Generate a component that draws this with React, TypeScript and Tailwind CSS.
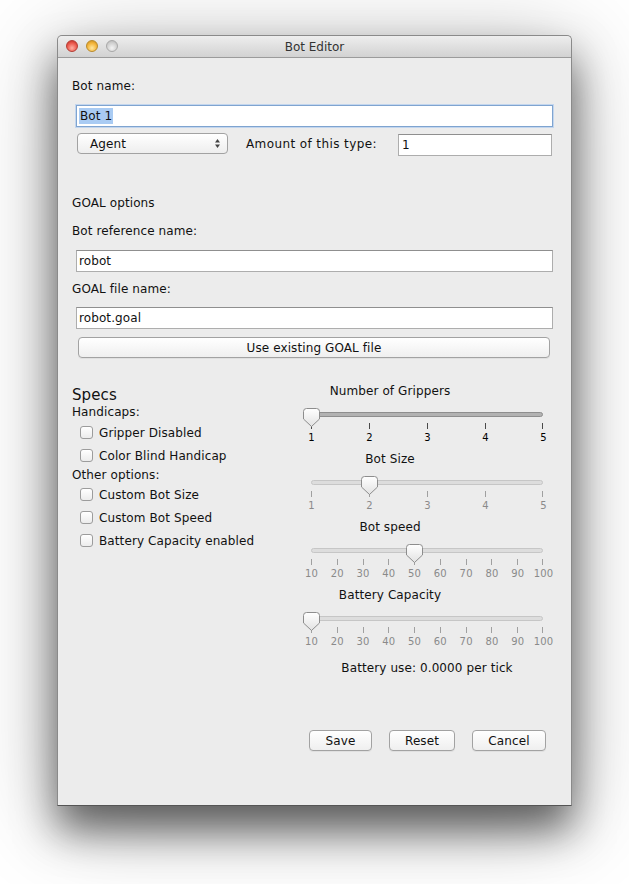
import React from "react";

function Thumb() {
  return (
    <svg width="17" height="19" viewBox="0 0 17 19">
      <defs>
        <linearGradient id="tg" x1="0" y1="0" x2="0" y2="1">
          <stop offset="0" stopColor="#ffffff" />
          <stop offset="1" stopColor="#e2e2e2" />
        </linearGradient>
      </defs>
      <path
        d="M0.5 3.5 Q0.5 0.5 3.5 0.5 H13.5 Q16.5 0.5 16.5 3.5 V11 L8.5 18.5 L0.5 11 Z"
        fill="url(#tg)"
        stroke="#8d8d8d"
      />
    </svg>
  );
}

type SliderProps = { title: string; labels: string[]; value: string; enabled: boolean };

function Slider({ title, labels, value, enabled }: SliderProps) {
  const n = labels.length;
  const W = 232;
  const idx = labels.indexOf(value);
  const tx = (idx / (n - 1)) * W;
  return (
    <div className="h-[68px]">
      <div className="w-[188px] text-center h-[16px] leading-[16px]">{title}</div>
      <div className="relative ml-[15px] w-[232px] h-[52px]">
        <div
          className={
            enabled
              ? "absolute left-0 right-0 top-[13px] h-[5px] rounded-full bg-[#b2b2b2] border border-[#8e8e8e]"
              : "absolute left-0 right-0 top-[13px] h-[5px] rounded-full bg-[#dddddd] border border-[#c6c6c6]"
          }
        />
        {labels.map((l, i) => {
          const x = (i / (n - 1)) * W;
          return (
            <React.Fragment key={l}>
              <div
                className={enabled ? "absolute top-[24px] h-[6px] w-px bg-[#4a4a4a]" : "absolute top-[24px] h-[6px] w-px bg-[#a0a0a0]"}
                style={{ left: Math.round(x) - (i === n - 1 ? 1 : 0) }}
              />
              <div
                className={
                  enabled
                    ? "absolute top-[33px] text-[10px] leading-[12px] text-black -translate-x-1/2 whitespace-nowrap tracking-[0.2px]"
                    : "absolute top-[33px] text-[10px] leading-[12px] text-[#8a8a8a] -translate-x-1/2 whitespace-nowrap tracking-[0.2px]"
                }
                style={{ left: x + 0.5 }}
              >
                {l}
              </div>
            </React.Fragment>
          );
        })}
        <div className="absolute top-[9px] z-10 leading-none" style={{ left: Math.round(tx) - 8 }}>
          <Thumb />
        </div>
      </div>
    </div>
  );
}

function Checkbox({ label }: { label: string }) {
  return (
    <div className="h-[23px] flex items-center pl-[8px]">
      <div className="w-[13px] h-[13px] rounded-[3px] border border-[#9c9c9c] bg-gradient-to-b from-white to-[#ececec] shadow-[inset_0_1px_0_#ffffff]" />
      <span className="ml-[6px]">{label}</span>
    </div>
  );
}

const inputCls =
  "h-[22px] bg-white border border-[#adadad] border-t-[#8f8f8f] pl-[2px] leading-[20px] flex items-center";

const btnCls =
  "h-[21px] rounded-[4px] border border-[#a2a2a2] bg-gradient-to-b from-white to-[#efefef] flex items-center justify-center shadow-[0_1px_0_rgba(0,0,0,0.05)]";

export default function App() {
  const nums5 = ["1", "2", "3", "4", "5"];
  const nums10 = ["10", "20", "30", "40", "50", "60", "70", "80", "90", "100"];
  return (
    <div className="w-[629px] h-[884px] bg-white overflow-hidden font-['DejaVu_Sans',sans-serif] text-[12px] text-[#111]">
      <div className="ml-[57px] mt-[35px] w-[515px] h-[771px] bg-[#ececec] border border-[#8a8a8a] border-b-[#555555] rounded-t-[5px] shadow-[0_24px_40px_rgba(0,0,0,0.55),0_14px_90px_rgba(0,0,0,0.3)] flex flex-col">
        {/* Title bar */}
        <div className="relative h-[22px] rounded-t-[5px] bg-gradient-to-b from-[#eeeeee] to-[#d2d2d2] border-b border-[#9b9b9b] flex items-center justify-center shrink-0">
          <div className="absolute left-[8px] top-[4px] flex gap-[8px]">
            <div className="w-[12px] h-[12px] rounded-full border border-[#b43c33] bg-[radial-gradient(circle_at_50%_70%,#ffb0a3,#ec5b4f_55%,#b82a22)]" />
            <div className="w-[12px] h-[12px] rounded-full border border-[#b98a2a] bg-[radial-gradient(circle_at_50%_70%,#ffe8a0,#f4b63c_55%,#c48a1c)]" />
            <div className="w-[12px] h-[12px] rounded-full border border-[#a8a8a8] bg-[radial-gradient(circle_at_50%_70%,#f4f4f4,#d2d2d2_55%,#b4b4b4)]" />
          </div>
          <span className="text-[#333] leading-[16px]">Bot Editor</span>
        </div>

        {/* Body */}
        <div className="flex flex-col pl-[14px] pr-[14px] pt-[20px] tracking-[0.1px]">
          <div className="h-[16px] leading-[16px]">Bot name:</div>
          <div className="mt-[11px] mx-[4px] h-[22px] bg-white border border-[#7fa4d0] shadow-[0_0_0_1px_#c3d6ee] pl-[2px] flex items-center">
            <span className="bg-[#a9cbf3] px-[1px] leading-[16px]">Bot 1</span>
          </div>

          <div className="mt-[6px] h-[22px] flex items-start">
            <div className="ml-[5px] w-[151px] h-[21px] rounded-[4px] border border-[#a2a2a2] bg-gradient-to-b from-white to-[#eeeeee] flex items-center pl-[12px] pr-[6px]">
              <span className="flex-1">Agent</span>
              <svg width="7" height="11" viewBox="0 0 7 11">
                <path d="M3.5 1 L6 4.5 H1 Z" fill="#444" />
                <path d="M3.5 10 L6 6.5 H1 Z" fill="#444" />
              </svg>
            </div>
            <div className="ml-[18px] h-[21px] flex items-center tracking-[0.4px]">Amount of this type:</div>
            <div className={"ml-auto mr-[5px] mt-[1px] w-[154px] " + inputCls + " h-[21px] pl-[3px]"}>1</div>
          </div>

          <div className="mt-[40px] h-[16px] leading-[16px]">GOAL options</div>
          <div className="mt-[12px] h-[16px] leading-[16px]">Bot reference name:</div>
          <div className={"mt-[11px] mx-[4px] " + inputCls}>robot</div>
          <div className="mt-[9px] h-[16px] leading-[16px]">GOAL file name:</div>
          <div className={"mt-[10px] mx-[4px] " + inputCls}>robot.goal</div>
          <div className={"mt-[8px] ml-[6px] mr-[7px] " + btnCls}>Use existing GOAL file</div>

          {/* Two columns */}
          <div className="mt-[22px] flex">
            <div className="w-[224px] pt-[7px]">
              <div className="text-[15px] leading-[17px]">Specs</div>
              <div className="h-[16px] leading-[16px]">Handicaps:</div>
              <div className="mt-[1px]">
                <Checkbox label="Gripper Disabled" />
                <Checkbox label="Color Blind Handicap" />
              </div>
              <div className="h-[16px] leading-[16px]">Other options:</div>
              <Checkbox label="Custom Bot Size" />
              <Checkbox label="Custom Bot Speed" />
              <Checkbox label="Battery Capacity enabled" />
            </div>
            <div className="flex-1 pt-[3px]">
              <Slider title="Number of Grippers" labels={nums5} value="1" enabled={true} />
              <Slider title="Bot Size" labels={nums5} value="2" enabled={false} />
              <Slider title="Bot speed" labels={nums10} value="50" enabled={false} />
              <Slider title="Battery Capacity" labels={nums10} value="10" enabled={false} />
              <div className="mt-[5px] ml-[15px] w-[232px] text-center h-[16px] leading-[16px]">
                Battery use: 0.0000 per tick
              </div>
            </div>
          </div>

          <div className="mt-[54px] flex justify-end gap-[17px] mr-[11px]">
            <div className={"w-[63px] " + btnCls}>Save</div>
            <div className={"w-[66px] " + btnCls}>Reset</div>
            <div className={"w-[74px] " + btnCls}>Cancel</div>
          </div>
        </div>
      </div>
    </div>
  );
}
